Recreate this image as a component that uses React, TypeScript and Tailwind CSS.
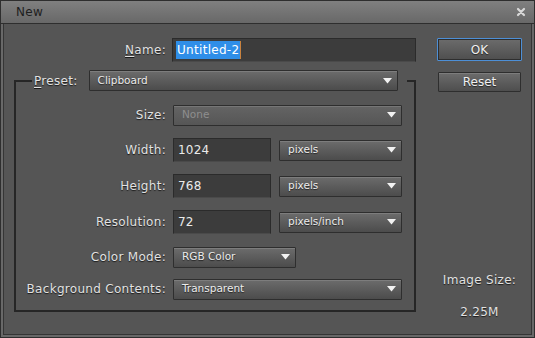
import React from "react";

const font = "font-['DejaVu_Sans',sans-serif]";
const labelCls =
  "text-[12px] tracking-[0.3px] text-[#e2e2e2] [text-shadow:0_1px_1px_rgba(0,0,0,0.7)] whitespace-nowrap";

function Arrow() {
  return (
    <svg width="9" height="6" viewBox="0 0 9 6" className="shrink-0">
      <path d="M0 0 L9 0 L4.5 5.5 Z" fill="#f2f2f2" />
    </svg>
  );
}

function Select({
  text,
  w,
  disabled = false,
}: {
  text: string;
  w: string;
  disabled?: boolean;
}) {
  return (
    <div
      className={`${w} h-[21px] flex items-center justify-between pl-[8px] pr-[5px] border border-[#2e2e2e] rounded-[1px] shadow-[inset_0_1px_0_rgba(255,255,255,0.12)] ${
        disabled
          ? "bg-linear-to-b from-[#646464] to-[#565656]"
          : "bg-linear-to-b from-[#6c6c6c] to-[#4c4c4c]"
      }`}
    >
      <span
        className={`text-[10.5px] ${
          disabled
            ? "text-[#8e8e8e]"
            : "text-[#ececec] [text-shadow:0_1px_1px_rgba(0,0,0,0.6)]"
        }`}
      >
        {text}
      </span>
      <Arrow />
    </div>
  );
}

function Input({ value, w }: { value: string; w: string }) {
  return (
    <div
      className={`${w} h-[24px] flex items-center pl-[4px] bg-[#3c3c3c] border border-[#2b2b2b] border-b-[#4a4a4a]`}
    >
      <span className="text-[12px] tracking-[0.2px] text-[#eaeaea]">{value}</span>
    </div>
  );
}

function Row({
  label,
  mt,
  children,
}: {
  label: React.ReactNode;
  mt: string;
  children: React.ReactNode;
}) {
  return (
    <div className={`flex items-center h-[24px] ${mt}`}>
      <div className={`w-[150px] text-right ${labelCls}`}>{label}</div>
      <div className="ml-[7px] flex items-center gap-[8px]">{children}</div>
    </div>
  );
}

export default function App() {
  return (
    <div
      className={`${font} w-[535px] h-[338px] bg-[#555555] border border-[#2e2e2e] flex flex-col overflow-hidden`}
    >
      {/* Title bar */}
      <div className="h-[23px] shrink-0 flex items-center justify-between bg-linear-to-b from-[#808080] to-[#686868] border-b border-[#2e2e2e] pl-[15px] pr-[8px]">
        <span className="text-[12px] tracking-[0.3px] text-[#1e1e1e]">New</span>
        <svg width="10" height="10" viewBox="0 0 10 10">
          <path
            d="M2 2 L8 8 M8 2 L2 8"
            stroke="#d8d8d8"
            strokeWidth="2.2"
            strokeLinecap="round"
          />
        </svg>
      </div>

      {/* Body */}
      <div className="flex-1 flex border-2 border-t-0 border-[#686868]">
        <div className="flex-1 flex border border-t-0 border-[#353535]">
          {/* Left column */}
          <div className="w-[413px] pl-[10px] pt-[14px] flex flex-col">
            <div className="flex items-center h-[24px]">
              <div className={`w-[152px] text-right ${labelCls}`}>
                <u className="underline-offset-2">N</u>ame:
              </div>
              <div className="ml-[6px] w-[244px] h-[24px] flex items-center pl-[3px] bg-[#3c3c3c] border border-[#2b2b2b] border-b-[#4a4a4a]">
                <span className="text-[12px] tracking-[0.3px] text-white bg-[#2f8ee8] h-[18px] leading-[18px] px-[1px]">
                  Untitled-2
                </span>
                <span className="w-[1px] h-[18px] bg-[#c9823e]" />
              </div>
            </div>

            <fieldset className="mt-[8px] w-[402px] border-2 border-[#262626] pb-[9px]">
              <legend className="ml-[16px] pl-[2px] pr-[9px]">
                <div className="flex items-center h-[21px]">
                  <span className={labelCls}>
                    <u className="underline-offset-2">P</u>reset:
                  </span>
                  <div className="ml-[11px]">
                    <Select text="Clipboard" w="w-[309px]" />
                  </div>
                </div>
              </legend>

              <Row label="Size:" mt="mt-[12px]">
                <Select text="None" w="w-[229px]" disabled />
              </Row>
              <Row label="Width:" mt="mt-[11px]">
                <Input value="1024" w="w-[98px]" />
                <Select text="pixels" w="w-[123px]" />
              </Row>
              <Row label="Height:" mt="mt-[12px]">
                <Input value="768" w="w-[98px]" />
                <Select text="pixels" w="w-[123px]" />
              </Row>
              <Row label="Resolution:" mt="mt-[12px]">
                <Input value="72" w="w-[98px]" />
                <Select text="pixels/inch" w="w-[123px]" />
              </Row>
              <Row label="Color Mode:" mt="mt-[11px]">
                <Select text="RGB Color" w="w-[123px]" />
              </Row>
              <Row label="Background Contents:" mt="mt-[8px]">
                <Select text="Transparent" w="w-[229px]" />
              </Row>
            </fieldset>
          </div>

          {/* Right column */}
          <div className="ml-[20px] w-[85px] pt-[14px] pb-[13px] flex flex-col items-center">
            <button className="w-[85px] h-[23px] border border-[#4d8fd6] rounded-[1px] bg-linear-to-b from-[#6c6c6c] to-[#4e4e4e] shadow-[inset_0_0_0_1px_#2e2e2e] text-[12px] text-[#f0f0f0] [text-shadow:0_1px_1px_rgba(0,0,0,0.6)]">
              OK
            </button>
            <button className="mt-[11px] w-[83px] h-[20px] border border-[#2e2e2e] rounded-[1px] bg-linear-to-b from-[#6c6c6c] to-[#4e4e4e] shadow-[inset_0_1px_0_rgba(255,255,255,0.12)] text-[12px] text-[#f0f0f0] [text-shadow:0_1px_1px_rgba(0,0,0,0.6)]">
              Reset
            </button>
            <div className="mt-auto flex flex-col items-center">
              <span className={labelCls}>Image Size:</span>
              <span className={`mt-[14px] ${labelCls}`}>2.25M</span>
            </div>
          </div>
        </div>
      </div>
    </div>
  );
}
